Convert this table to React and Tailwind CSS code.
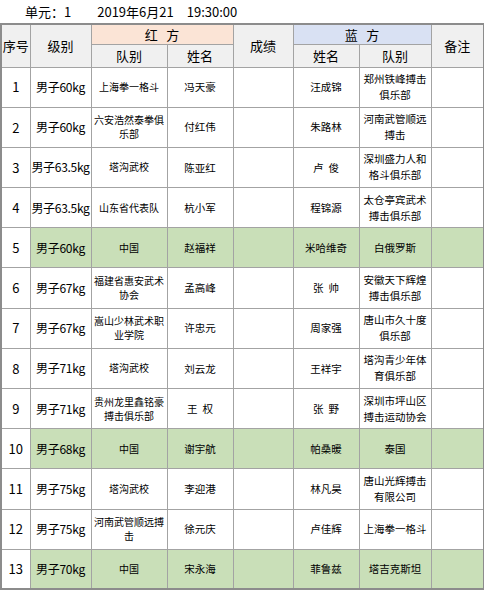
import React from "react";

const rows = [
  { n: "1", w: "男子60kg", rt: ["上海拳一格斗"], rn: "冯天豪", bn: "汪成锦", bt: ["郑州铁峰搏击", "俱乐部"] },
  { n: "2", w: "男子60kg", rt: ["六安浩然泰拳俱", "乐部"], rn: "付红伟", bn: "朱路林", bt: ["河南武管顺远", "搏击"] },
  { n: "3", w: "男子63.5kg", rt: ["塔沟武校"], rn: "陈亚红", bn: "卢\u2002俊", bt: ["深圳盛力人和", "格斗俱乐部"] },
  { n: "4", w: "男子63.5kg", rt: ["山东省代表队"], rn: "杭小军", bn: "程锦源", bt: ["太仓亭宾武术", "搏击俱乐部"] },
  { n: "5", w: "男子60kg", rt: ["中国"], rn: "赵福祥", bn: "米哈维奇", bt: ["白俄罗斯"], g: true },
  { n: "6", w: "男子67kg", rt: ["福建省惠安武术", "协会"], rn: "孟高峰", bn: "张\u2002帅", bt: ["安徽天下辉煌", "搏击俱乐部"] },
  { n: "7", w: "男子67kg", rt: ["嵩山少林武术职", "业学院"], rn: "许忠元", bn: "周家强", bt: ["唐山市久十度", "俱乐部"] },
  { n: "8", w: "男子71kg", rt: ["塔沟武校"], rn: "刘云龙", bn: "王祥宇", bt: ["塔沟青少年体", "育俱乐部"] },
  { n: "9", w: "男子71kg", rt: ["贵州龙里鑫铭豪", "搏击俱乐部"], rn: "王\u2002权", bn: "张\u2002野", bt: ["深圳市坪山区", "搏击运动协会"] },
  { n: "10", w: "男子68kg", rt: ["中国"], rn: "谢宇航", bn: "帕桑暖", bt: ["泰国"], g: true },
  { n: "11", w: "男子75kg", rt: ["塔沟武校"], rn: "李迎港", bn: "林凡昊", bt: ["唐山光辉搏击", "有限公司"] },
  { n: "12", w: "男子75kg", rt: ["河南武管顺远搏", "击"], rn: "徐元庆", bn: "卢佳辉", bt: ["上海拳一格斗"] },
  { n: "13", w: "男子70kg", rt: ["中国"], rn: "宋永海", bn: "菲鲁兹", bt: ["塔吉克斯坦"], g: true },
];

const font = { fontFamily: '"Noto Sans CJK SC", "Noto Sans", sans-serif' };

function Lines({ lines, cls }) {
  return (
    <div className={cls}>
      {lines.map((l, i) => (
        <div key={i}>{l}</div>
      ))}
    </div>
  );
}

export default function App() {
  const td = "border border-[#a3a3a3] text-center align-middle p-0";
  return (
    <div className="w-[484px] h-[592px] bg-white text-black overflow-hidden" style={font}>
      <div className="h-[23px] flex items-center pl-[25px] text-[13px] leading-none">
        <span>单元：1</span>
        <span className="ml-[26px]">2019年6月21</span>
        <span className="ml-[13px]">19:30:00</span>
      </div>
      <table className="table-fixed border-collapse w-[483px] border-2 border-[#8c8c8c]">
        <colgroup>
          <col className="w-[29px]" />
          <col className="w-[61px]" />
          <col className="w-[76px]" />
          <col className="w-[66px]" />
          <col className="w-[60px]" />
          <col className="w-[66px]" />
          <col className="w-[72px]" />
          <col className="w-[53px]" />
        </colgroup>
        <thead>
          <tr className="h-[20px]">
            <td rowSpan={2} className={`${td} bg-[#f0f0f0] text-[13px]`}>序号</td>
            <td rowSpan={2} className={`${td} bg-[#f0f0f0] text-[13px]`}>级别</td>
            <td colSpan={2} className={`${td} bg-[#fbe4d6] text-[13px] leading-none`}>红&nbsp;&nbsp;&nbsp;方</td>
            <td rowSpan={2} className={`${td} bg-[#f0f0f0] text-[13px]`}>成绩</td>
            <td colSpan={2} className={`${td} bg-[#d9e1f3] text-[13px] leading-none`}>蓝&nbsp;&nbsp;&nbsp;方</td>
            <td rowSpan={2} className={`${td} bg-[#f0f0f0] text-[13px]`}>备注</td>
          </tr>
          <tr className="h-[23px]">
            <td className={`${td} bg-[#f0f0f0] text-[13px] leading-none`}>队别</td>
            <td className={`${td} bg-[#f0f0f0] text-[13px] leading-none`}>姓名</td>
            <td className={`${td} bg-[#f0f0f0] text-[13px] leading-none`}>姓名</td>
            <td className={`${td} bg-[#f0f0f0] text-[13px] leading-none`}>队别</td>
          </tr>
        </thead>
        <tbody>
          {rows.map((r) => {
            const bg = r.g ? "bg-[#c9dfb8]" : "bg-white";
            return (
              <tr key={r.n} className="h-[40.2px]">
                <td className={`${td} bg-white text-[13px]`}>{r.n}</td>
                <td className={`${td} ${bg} text-[12px] whitespace-nowrap tracking-[-0.3px]`}>{r.w}</td>
                <td className={`${td} ${bg}`}>
                  <Lines lines={r.rt} cls="text-[10px] leading-[14px] whitespace-nowrap" />
                </td>
                <td className={`${td} ${bg} text-[10.5px]`}>{r.rn}</td>
                <td className={`${td} ${bg}`}></td>
                <td className={`${td} ${bg} text-[10.5px]`}>{r.bn}</td>
                <td className={`${td} ${bg}`}>
                  <Lines lines={r.bt} cls="text-[10.5px] leading-[16px] whitespace-nowrap" />
                </td>
                <td className={`${td} ${bg}`}></td>
              </tr>
            );
          })}
        </tbody>
      </table>
    </div>
  );
}
